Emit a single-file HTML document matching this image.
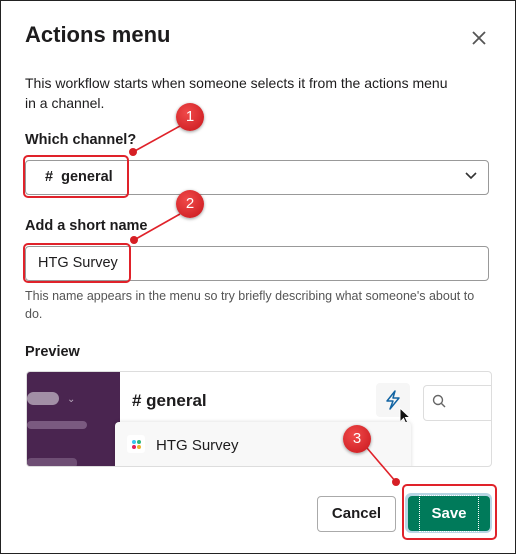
<!DOCTYPE html><html><head><style>
body{margin:0;width:516px;height:554px;overflow:hidden;background:#fff;font-family:"Liberation Sans",sans-serif;color:#1d1c1d}
.frame{position:absolute;left:0;top:0;width:514px;height:552px;border:1px solid #222}
.a{position:absolute}
.b{font-weight:bold}
.circ{position:absolute;width:28px;height:28px;border-radius:50%;background:radial-gradient(circle at 40% 35%,#f04a4a,#c8161c);color:#fff;font-size:15px;text-align:center;line-height:28px;box-shadow:0 1px 3px rgba(0,0,0,.4)}
.dot{position:absolute;width:8px;height:8px;border-radius:50%;background:#d61f25}
.rb{position:absolute;border:2px solid #e0222a;border-radius:5px}
</style></head><body><div class="frame"></div>
<div class="a b" style="left:25px;top:22px;font-size:22px">Actions menu</div>
<svg class="a" style="left:471px;top:30px" width="16" height="16"><path d="M2 2L14 14M14 2L2 14" stroke="#555" stroke-width="1.8"/></svg>
<div class="a" style="left:25px;top:73px;font-size:14px;line-height:20px;width:435px">This workflow starts when someone selects it from the actions menu in a channel.</div>
<div class="a b" style="left:25px;top:132px;font-size:14.5px">Which channel?</div>
<div class="a" style="left:25px;top:160px;width:462px;height:33px;border:1px solid #999;border-radius:4px"></div>
<div class="a b" style="left:45px;top:169px;font-size:14.5px">#&nbsp;&nbsp;general</div>
<svg class="a" style="left:465px;top:172px" width="12" height="8"><path d="M1 1L6 6L11 1" stroke="#333" stroke-width="1.6" fill="none"/></svg>
<div class="a b" style="left:25px;top:218px;font-size:14.5px">Add a short name</div>
<div class="a" style="left:25px;top:246px;width:462px;height:33px;border:1px solid #999;border-radius:4px"></div>
<div class="a" style="left:38px;top:255px;font-size:14.5px">HTG Survey</div>
<div class="a" style="left:25px;top:287px;font-size:12.5px;line-height:18px;color:#555;width:455px">This name appears in the menu so try briefly describing what someone's about to do.</div>
<div class="a b" style="left:25px;top:344px;font-size:14.5px">Preview</div>
<div class="a" style="left:26px;top:371px;width:464px;height:94px;border:1px solid #ddd;border-radius:4px;overflow:hidden">
 <div class="a" style="left:0;top:0;width:93px;height:94px;background:#4a2550"></div>
 <div class="a" style="left:0;top:20px;width:32px;height:13px;border-radius:7px;background:#a28fa6"></div>
 <div class="a" style="left:40px;top:22px;color:#b9a9bd;font-size:10px">⌄</div>
 <div class="a" style="left:0;top:49px;width:60px;height:8px;border-radius:4px;background:#7a5a80"></div>
 <div class="a" style="left:0;top:86px;width:50px;height:10px;border-radius:4px;background:#6e4e74"></div>
 <div class="a b" style="left:105px;top:19px;font-size:17px">#&nbsp;general</div>
 <div class="a" style="left:349px;top:11px;width:34px;height:34px;background:#f6f6f6;border-radius:4px"></div>
 <svg class="a" style="left:357px;top:18px" width="18" height="20"><path d="M11 1L3 11H9L6 19L15 8H9Z" stroke="#1264a3" stroke-width="1.5" fill="none" stroke-linejoin="round"/></svg>
 <svg class="a" style="left:372px;top:35px" width="14" height="20"><path d="M1 1L1 15L4.5 11.5L7 17L9 16L6.5 10.5L11 10.5Z" fill="#111" stroke="#fff" stroke-width="1"/></svg>
 <div class="a" style="left:396px;top:13px;width:80px;height:34px;border:1px solid #ddd;border-radius:4px"></div>
 <svg class="a" style="left:405px;top:22px" width="14" height="14"><circle cx="6" cy="6" r="4.5" stroke="#666" stroke-width="1.4" fill="none"/><path d="M9.5 9.5L13 13" stroke="#666" stroke-width="1.4"/></svg>
 <div class="a" style="left:88px;top:50px;width:296px;height:50px;background:#f8f8f8;box-shadow:0 0 4px rgba(0,0,0,.15);border-radius:4px"></div>
 <div class="a" style="left:100px;top:63px;width:18px;height:18px;background:#fff;border-radius:3px"></div>
 <div class="a" style="left:105px;top:68px;width:4px;height:4px;border-radius:2px;background:#36c5f0"></div>
 <div class="a" style="left:110px;top:68px;width:4px;height:4px;border-radius:2px;background:#2eb67d"></div>
 <div class="a" style="left:105px;top:73px;width:4px;height:4px;border-radius:2px;background:#e01e5a"></div>
 <div class="a" style="left:110px;top:73px;width:4px;height:4px;border-radius:2px;background:#ecb22e"></div>
 <div class="a" style="left:129px;top:65px;font-size:15px">HTG Survey</div>
</div>
<div class="a b" style="left:317px;top:496px;width:77px;height:34px;border:1px solid #aaa;border-radius:4px;text-align:center;line-height:34px;font-size:15px">Cancel</div>
<div class="a" style="left:405px;top:493px;width:87px;height:40px;background:#b8d6e4;border-radius:6px"></div>
<div class="a b" style="left:408px;top:496px;width:82px;height:35px;background:#007a5a;border-radius:4px;color:#fff;text-align:center;line-height:35px;font-size:15px"><span style="border:1px dotted #fff;padding:9px 11px">Save</span></div>
<div class="rb" style="left:23px;top:155px;width:102px;height:39px"></div>
<div class="rb" style="left:23px;top:243px;width:104px;height:36px"></div>
<div class="rb" style="left:402px;top:484px;width:91px;height:52px"></div>
<svg class="a" style="left:0;top:0" width="516" height="554"><g stroke="#e0222a" stroke-width="1.6"><line x1="180" y1="126" x2="133" y2="152"/><line x1="180" y1="214" x2="134" y2="240"/><line x1="367" y1="448" x2="396" y2="482"/></g></svg>
<div class="dot" style="left:129px;top:148px"></div>
<div class="dot" style="left:130px;top:236px"></div>
<div class="dot" style="left:392px;top:478px"></div>
<div class="circ" style="left:176px;top:103px">1</div>
<div class="circ" style="left:176px;top:190px">2</div>
<div class="circ" style="left:343px;top:425px">3</div>
</body></html>
